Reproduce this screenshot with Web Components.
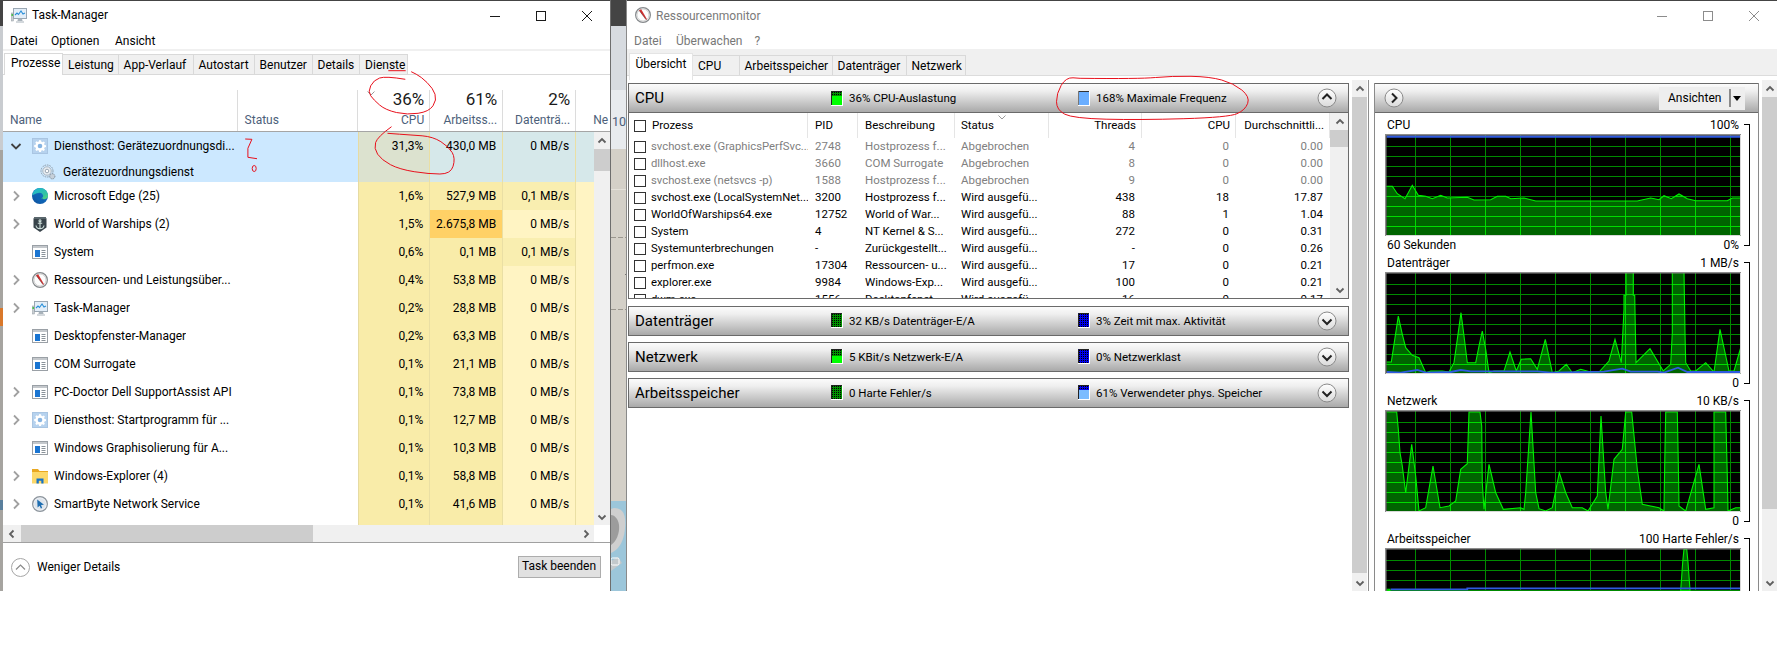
<!DOCTYPE html>
<html lang="de"><head><meta charset="utf-8"><title>Task-Manager und Ressourcenmonitor</title>
<style>
html,body{margin:0;padding:0;background:#fff;overflow:hidden}
body{font:12px "Roboto","Liberation Sans",sans-serif;color:#000;width:1777px;height:648px}
</style></head><body>
<desk-root>
  <desk-strip slot="strip"></desk-strip>
  <tm-window slot="tm">
    <win-titlebar slot="title"><app-icon slot="icon" kind="taskmgr"></app-icon>Task-Manager</win-titlebar>
    <win-menu slot="menu" items="Datei:7|Optionen:48|Ansicht:112"></win-menu>
    <win-tabs slot="tabs" items="Prozesse:59|Leistung:55.6|App-Verlauf:75|Autostart:61|Benutzer:58|Details:47.5|Dienste:48" first="1" mode="tm"></win-tabs>
    <tm-head slot="head"></tm-head>
    <tm-row expand="open" sel cpu="31,3%" mem="430,0 MB" disk="0 MB/s"><app-icon slot="icon" kind="gearbox"></app-icon>Diensthost: Gerätezuordnungsdi...</tm-row>
    <tm-row child sel><app-icon slot="icon" kind="gear"></app-icon>Gerätezuordnungsdienst</tm-row>
    <tm-row expand="closed" cpu="1,6%" mem="527,9 MB" disk="0,1 MB/s" diskwarm><app-icon slot="icon" kind="edge"></app-icon>Microsoft Edge (25)</tm-row>
    <tm-row expand="closed" cpu="1,5%" mem="2.675,8 MB" disk="0 MB/s" memhot><app-icon slot="icon" kind="wows"></app-icon>World of Warships (2)</tm-row>
    <tm-row cpu="0,6%" mem="0,1 MB" disk="0,1 MB/s" diskwarm><app-icon slot="icon" kind="win"></app-icon>System</tm-row>
    <tm-row expand="closed" cpu="0,4%" mem="53,8 MB" disk="0 MB/s"><app-icon slot="icon" kind="resmon"></app-icon>Ressourcen- und Leistungsüber...</tm-row>
    <tm-row expand="closed" cpu="0,2%" mem="28,8 MB" disk="0 MB/s"><app-icon slot="icon" kind="taskmgr"></app-icon>Task-Manager</tm-row>
    <tm-row cpu="0,2%" mem="63,3 MB" disk="0 MB/s"><app-icon slot="icon" kind="win"></app-icon>Desktopfenster-Manager</tm-row>
    <tm-row cpu="0,1%" mem="21,1 MB" disk="0 MB/s"><app-icon slot="icon" kind="win"></app-icon>COM Surrogate</tm-row>
    <tm-row expand="closed" cpu="0,1%" mem="73,8 MB" disk="0 MB/s"><app-icon slot="icon" kind="win"></app-icon>PC-Doctor Dell SupportAssist API</tm-row>
    <tm-row expand="closed" cpu="0,1%" mem="12,7 MB" disk="0 MB/s"><app-icon slot="icon" kind="gearbox"></app-icon>Diensthost: Startprogramm für ...</tm-row>
    <tm-row cpu="0,1%" mem="10,3 MB" disk="0 MB/s"><app-icon slot="icon" kind="win"></app-icon>Windows Graphisolierung für A...</tm-row>
    <tm-row expand="closed" cpu="0,1%" mem="58,8 MB" disk="0 MB/s"><app-icon slot="icon" kind="folder"></app-icon>Windows-Explorer (4)</tm-row>
    <tm-row expand="closed" cpu="0,1%" mem="41,6 MB" disk="0 MB/s"><app-icon slot="icon" kind="smart"></app-icon>SmartByte Network Service</tm-row>
    <tm-row><app-icon slot="icon" kind="win"></app-icon></tm-row>
  </tm-window>
  <desk-gap slot="gap">103</desk-gap>
  <rm-window slot="rm">
    <win-titlebar slot="title" tone="gray"><app-icon slot="icon" kind="resmon"></app-icon>Ressourcenmonitor</win-titlebar>
    <win-menu slot="menu" items="Datei:7|Überwachen:49|?:127.5" tone="gray"></win-menu>
    <win-tabs slot="tabs" items="Übersicht:64.5|CPU:46.5|Arbeitsspeicher:93|Datenträger:74|Netzwerk:59.5" first="1.5" mode="rm"></win-tabs>

    <rm-bar slot="left" open t1="36% CPU-Auslastung" t2="168% Maximale Frequenz" i1="cpu" i2="freq">CPU</rm-bar>
    <rm-table slot="left">
      <rm-row a="svchost.exe (GraphicsPerfSvc..." b="2748" c="Hostprozess f..." d="Abgebrochen" e="4" f="0" g="0.00" dim></rm-row>
      <rm-row a="dllhost.exe" b="3660" c="COM Surrogate" d="Abgebrochen" e="8" f="0" g="0.00" dim></rm-row>
      <rm-row a="svchost.exe (netsvcs -p)" b="1588" c="Hostprozess f..." d="Abgebrochen" e="9" f="0" g="0.00" dim></rm-row>
      <rm-row a="svchost.exe (LocalSystemNet..." b="3200" c="Hostprozess f..." d="Wird ausgefü..." e="438" f="18" g="17.87"></rm-row>
      <rm-row a="WorldOfWarships64.exe" b="12752" c="World of War..." d="Wird ausgefü..." e="88" f="1" g="1.04"></rm-row>
      <rm-row a="System" b="4" c="NT Kernel &amp; S..." d="Wird ausgefü..." e="272" f="0" g="0.31"></rm-row>
      <rm-row a="Systemunterbrechungen" b="-" c="Zurückgestellt..." d="Wird ausgefü..." e="-" f="0" g="0.26"></rm-row>
      <rm-row a="perfmon.exe" b="17304" c="Ressourcen- u..." d="Wird ausgefü..." e="17" f="0" g="0.21"></rm-row>
      <rm-row a="explorer.exe" b="9984" c="Windows-Exp..." d="Wird ausgefü..." e="100" f="0" g="0.21"></rm-row>
      <rm-row a="dwm.exe" b="1556" c="Desktopfenst..." d="Wird ausgefü..." e="16" f="0" g="0.17"></rm-row>
    </rm-table>
    <rm-bar slot="left" t1="32 KB/s Datenträger-E/A" t2="3% Zeit mit max. Aktivität" i1="dark" i2="blue">Datenträger</rm-bar>
    <rm-bar slot="left" t1="5 KBit/s Netzwerk-E/A" t2="0% Netzwerklast" i1="net" i2="blue">Netzwerk</rm-bar>
    <rm-bar slot="left" t1="0 Harte Fehler/s" t2="61% Verwendeter phys. Speicher" i1="dark" i2="mem">Arbeitsspeicher</rm-bar>

    <rm-graph slot="right" kind="cpu" label="CPU" top="100%" sub="60 Sekunden" bottom="0%"></rm-graph>
    <rm-graph slot="right" kind="disk" label="Datenträger" top="1 MB/s" bottom="0"></rm-graph>
    <rm-graph slot="right" kind="net" label="Netzwerk" top="10 KB/s" bottom="0"></rm-graph>
    <rm-graph slot="right" kind="mem" label="Arbeitsspeicher" top="100 Harte Fehler/s" bottom=""></rm-graph>
  </rm-window>
  <red-marks slot="marks"></red-marks>
</desk-root>
<script>
function shadow(host,html){const r=host.attachShadow({mode:'open'});r.innerHTML=html;return r;}

const ICONS={
taskmgr:`<rect x="2.5" y="1.5" width="13" height="10" fill="#e3eef8" stroke="#9aa7b3"/><path d="M4 8l2-2 1.5 1.5L10 4l2 3 2-1" fill="none" stroke="#2a8fd8" stroke-width="1.1"/><rect x="0" y="6" width="2.4" height="8" fill="#c9ced2" stroke="#8e979e" stroke-width=".5"/><rect x=".5" y="7" width="1.4" height="2" fill="#3cc13c"/><path d="M7 11.8h4l.6 2.2H6.4zM5 14.4h8v1.1H5z" fill="#a8b2ba"/>`,
gearbox:`<rect x=".5" y=".5" width="15" height="15" fill="#b6d2ee" stroke="#a9c5e2"/><path d="M8 2.2l1 .1.4 1.5 1 .4 1.3-.8 1.2 1.2-.8 1.3.4 1 1.5.4v1.8l-1.5.4-.4 1 .8 1.3-1.2 1.2-1.3-.8-1 .4-.4 1.5H7.2l-.4-1.5-1-.4-1.3.8-1.2-1.2.8-1.3-.4-1-1.5-.4V7.1l1.5-.4.4-1-.8-1.3 1.2-1.2 1.3.8 1-.4.4-1.5z" fill="#fff"/><circle cx="8" cy="8" r="2.3" fill="#86b4e2"/>`,
gear:`<g fill="none" stroke="#8e9aa6" stroke-width="1" stroke-dasharray="1.6 .9"><circle cx="7" cy="7" r="6"/></g><circle cx="7" cy="7" r="4.2" fill="#e9eff4" stroke="#aab4be"/><circle cx="7" cy="7" r="1.8" fill="#fff" stroke="#9aa6b2"/><circle cx="12.3" cy="12.3" r="2.6" fill="#c6d0da" stroke="#7f8c99" stroke-dasharray="1.2 .7"/>`,
edge:`<defs><linearGradient id="e1" x1="0" y1="1" x2="1" y2="0"><stop offset="0" stop-color="#0b4f9c"/><stop offset="1" stop-color="#1a7fd0"/></linearGradient><linearGradient id="e2" x1="0" y1="0" x2="1" y2="1"><stop offset="0" stop-color="#1ab4d8"/><stop offset=".7" stop-color="#35c4a0"/><stop offset="1" stop-color="#5fdc68"/></linearGradient></defs><circle cx="8" cy="8" r="8" fill="url(#e1)"/><path d="M.4 7.3C1 3 4.2 0 8 0c4.4 0 8 3.4 8 7.7 0 2.3-2 3.5-4 3.5-1.2 0-2.2-.4-2.7-.9 1.7-.5 2.2-2 1.6-3.2C10.200 5.300 8.800 4.600 7.200 4.800 3.800 5.200 1.800 6.800.4 7.300z" fill="url(#e2)"/><path d="M4.500 9.500C4.700 7 6.500 5.600 8.300 5.700c-1.300 1.200-1.300 3.400.2 5 1.200 1.300 3.400 2 5.700 1.200-1.700 2-5 2.700-7 1.500-1.800-1-2.900-2.300-2.700-3.900z" fill="#0d62b4"/>`,
wows:`<path d="M2.500 1h11l1 2v8.500L8 16l-6.500-4.500V3z" fill="#38434a"/><path d="M2.500 1h11l1 2H1.500z" fill="#59666c"/><g stroke="#cfe0dc" stroke-width="1.100" fill="none"><circle cx="8" cy="4.700" r="1"/><path d="M8 5.700v7M5.800 7.200h4.400M4 9.500c.3 2.300 2.200 3.200 4 3.200s3.700-.9 4-3.200"/></g>`,
win:`<rect x=".5" y="1.500" width="15" height="13" fill="#fff" stroke="#9aa0a6"/><rect x="1" y="2" width="14" height="2" fill="#c4c8cc"/><rect x="3" y="6" width="5" height="7" fill="#1a75d2"/><path d="M9.500 6.500h4M9.500 8.500h4M9.500 10.500h4M9.500 12.500h4" stroke="#8a9299" stroke-width="1"/>`,
resmon:`<defs><radialGradient id="r1"><stop offset=".75" stop-color="#fdfdfd"/><stop offset="1" stop-color="#e8e8e8"/></radialGradient></defs><circle cx="8" cy="8" r="7.400" fill="url(#r1)" stroke="#85898c" stroke-width="1.200"/><circle cx="8" cy="8" r="6" fill="none" stroke="#c9c9c9" stroke-width=".8"/><path d="M4 3.300l2.200-1L12 12.300l-.8.500z" fill="#d03030"/><path d="M4.300 3.500L11 12.600" stroke="#5a1e1e" stroke-width=".5"/>`,
folder:`<path d="M0 1h6l1.500 2H16v2H0z" fill="#e9a820"/><rect x="0" y="4" width="16" height="11.500" fill="#fcd86a"/><path d="M4.500 15.500V10.500h7v5h-2.200v-2.800H6.800v2.800z" fill="#1673c8"/>`,
smart:`<circle cx="8" cy="8" r="7.400" fill="#eef2f6" stroke="#8c949c" stroke-width="1.200"/><circle cx="8" cy="8" r="5.800" fill="#dfe5ec"/><path d="M5.200 3.500L12 8.800l-2.900.3 1 3-1.200 .5-1.300-2.800-2 1.600z" fill="#1d6db0"/>`
};
class AppIcon extends HTMLElement{connectedCallback(){if(this.shadowRoot)return;
  shadow(this,`<style>:host{display:block;width:16px;height:16px;flex:none}svg{display:block;width:16px;height:16px}</style><svg viewBox="0 0 16 16">${ICONS[this.getAttribute('kind')]||''}</svg>`);}}
customElements.define('app-icon',AppIcon);

class DeskRoot extends HTMLElement{constructor(){super();
  shadow(this,`<style>:host{display:block;position:relative;width:1777px;height:648px;overflow:hidden}
  .g{display:grid;grid-template-columns:3px 607px 17px 1150px;height:591px}</style>
  <div class="g"><slot name="strip"></slot><slot name="tm"></slot><slot name="gap"></slot><slot name="rm"></slot></div><slot name="marks"></slot>`);}}
customElements.define('desk-root',DeskRoot);

class DeskStrip extends HTMLElement{constructor(){super();
  shadow(this,`<style>:host{display:block;height:591px;background:linear-gradient(#444 0 26px,#c9ccd0 26px 150px,#a6a4a0 150px 308px,#d9782a 308px 326px,#a6a4a0 326px 500px,#5a7f9c 500px 510px,#a6a4a0 510px 591px)}</style>`);}}
customElements.define('desk-strip',DeskStrip);

class DeskGap extends HTMLElement{constructor(){super();
  shadow(this,`<style>:host{display:flex;flex-direction:column;height:591px;box-sizing:border-box;border-left:1px solid #6e6e6e;border-right:1px solid #8a8a8a;overflow:hidden}
  .a{height:26px;background:#444}.b{height:64px;background:#d7dbe0}
  .c{height:59px;background:#e8ebee;color:#4c607a;font-size:12.500px;line-height:16px;padding:24px 0 0 1px;box-sizing:border-box;white-space:nowrap}
  .d{height:352px;background:#d4d0c8}.d svg{display:block}
  .e{height:90px;background:#9cc6da}.e svg{display:block}</style>
  <div class="a"></div><div class="b"></div><div class="c"><slot></slot></div>
  <div class="d"><svg width="15" height="352"><path d="M0 40.500H15" stroke="#e4e1da"/><path d="M0 88.500H15" stroke="#9a968e" stroke-dasharray="5 2"/><path d="M14 125.500H15" stroke="#777"/><path d="M0 160.500H15" stroke="#9a968e" stroke-dasharray="5 2"/></svg></div>
  <div class="e"><svg width="15" height="90"><path d="M0 8c3-2 8-1 11 2 4 4 4 14 2 24-2 8-5 14-13 18z" fill="#cfcfcf"/><path d="M0 14c3 0 7 3 8 10 1 8-3 17-8 20z" fill="#9c9c9c"/><path d="M0 60l7-4 4 6-11 8z" fill="#c3c9cc"/><rect x="0" y="57" width="8" height="7" rx="1.500" fill="none" stroke="#fff"/></svg></div>`);}}
customElements.define('desk-gap',DeskGap);

class WinTitlebar extends HTMLElement{constructor(){super();const g=this.getAttribute('tone')==='gray';
  const c=g?'#8c8c8c':'#1a1a1a';
  shadow(this,`<style>:host{display:flex;align-items:center;height:29px;background:#fff;color:${g?'#7a7a7a':'#000'};white-space:nowrap;box-sizing:border-box;padding-left:8px}
  .t{margin-left:5px;${g?'':'margin-top:-1px'}}::slotted(app-icon){margin-top:-2px}
  .btns{margin-left:auto;display:flex;height:100%;align-items:center}
  .btns svg{display:block}.b{width:46px;display:flex;justify-content:center}</style>
  <slot name="icon"></slot><span class="t"><slot></slot></span>
  <div class="btns"><div class="b"><svg width="10" height="10"><path d="M0 5.500H10" stroke="${c}"/></svg></div><div class="b"><svg width="10" height="10"><rect x=".5" y=".5" width="9" height="9" fill="none" stroke="${c}"/></svg></div><div class="b"><svg width="10" height="10"><path d="M0 0L10 10M10 0L0 10" stroke="${c}"/></svg></div></div>`);}}
customElements.define('win-titlebar',WinTitlebar);

class WinMenu extends HTMLElement{constructor(){super();const g=this.getAttribute('tone')==='gray';
  const it=this.getAttribute('items').split('|').map(s=>s.split(':'));
  const h=it.map(([t,x])=>`<span style="left:${x}px">${t}</span>`).join('');
  shadow(this,`<style>:host{display:block;position:relative;height:19px;background:#fff;color:${g?'#777':'#000'}}
  span{position:absolute;top:3px;line-height:16px;white-space:nowrap}</style>${h}`);}}
customElements.define('win-menu',WinMenu);

class WinTabs extends HTMLElement{constructor(){super();
  const it=this.getAttribute('items').split('|').map(s=>s.split(':'));const tm=this.getAttribute('mode')==='tm';
  const h=it.map(([t,w],i)=>`<div class="t ${i==0?'on':''}" style="width:${w}px">${t}</div>`).join('');
  shadow(this,`<style>:host{display:flex;align-items:flex-end;height:26px;box-sizing:border-box;padding-left:${this.getAttribute('first')}px;
    ${tm?'background:linear-gradient(#f0f0f0 0 2px,#fff 2px);border-bottom:1px solid #d9d9d9':'background:#f0f0f0'};position:relative}
  .t{box-sizing:border-box;height:20px;background:#f0f0f0;border:1px solid #d9d9d9;border-left:0;border-bottom:0;line-height:20px;padding-left:5px;white-space:nowrap;overflow:hidden}
  .on{background:#fff;border:1px solid #d9d9d9;border-bottom:0;${tm?'height:22px;margin-bottom:-1px;line-height:18px;padding-left:6px':'height:27px;margin-bottom:-5px;line-height:20px;padding-left:6px;padding-bottom:6px;position:relative;z-index:2;border-color:#e4e4e4'}}
  </style>${h}`);}}
customElements.define('win-tabs',WinTabs);

class WinScroll extends HTMLElement{constructor(){super();
  const o=this.getAttribute('o')||'v',s=+this.getAttribute('s')||0,n=+this.getAttribute('n')||0;const v=o==='v';
  const a=`<path d="M2.500 7.500L6 4l3.500 3.500" fill="none" stroke="#5f5f5f" stroke-width="1.800"/>`;
  const b=`<path d="M2.500 4.500L6 8l3.500-3.500" fill="none" stroke="#5f5f5f" stroke-width="1.800"/>`;
  const l=`<path d="M7.500 2.500L4 6l3.500 3.500" fill="none" stroke="#5f5f5f" stroke-width="1.800"/>`;
  const r=`<path d="M4.500 2.500L8 6l-3.500 3.500" fill="none" stroke="#5f5f5f" stroke-width="1.800"/>`;
  shadow(this,`<style>:host{display:flex;${v?'flex-direction:column':''};background:#f0f0f0;box-sizing:border-box;flex:none}
  .a{flex:none;${v?'height:17px':'width:17px'};display:flex;align-items:center;justify-content:center}
  .tr{flex:1;min-${v?'height':'width'}:0}
  .th{background:#cdcdcd;${v?`margin-top:${s}px;height:${n}px`:`margin-left:${s}px;width:${n}px;height:100%`}}</style>
  <div class="a"><svg width="12" height="12">${v?a:l}</svg></div><div class="tr"><div class="th"></div></div><div class="a"><svg width="12" height="12">${v?b:r}</svg></div>`);}}
customElements.define('win-scroll',WinScroll);

const TMCOLS='234.6px 120px 72.6px 73px 73px 17.8px';
class TmWindow extends HTMLElement{constructor(){super();
  shadow(this,`<style>:host{display:flex;flex-direction:column;height:591px;width:607px;box-sizing:border-box;border-top:1px solid #444;background:#fff;overflow:hidden}
  .body{display:flex;height:393px;flex:none}.rows{width:591px;overflow:hidden;flex:none;height:393px}
  .hs{display:flex;height:17px;flex:none}
  .foot{flex:1;border-top:1px solid #a0a0a0;display:flex;align-items:center;padding:0 9.500px 0 8px}
  .foot svg{display:block;margin-right:7px}.btn{margin-left:auto;width:83px;height:22px;box-sizing:border-box;border:1px solid #adadad;background:#e1e1e1;text-align:center;line-height:19px;white-space:nowrap}
  win-scroll.h{width:591px}.c{flex:1}</style>
  <slot name="title"></slot><slot name="menu"></slot><slot name="tabs"></slot><slot name="head"></slot>
  <div class="body"><div class="rows"><slot></slot></div><win-scroll o="v" s="0" n="22" style="width:16px"></win-scroll></div>
  <div class="hs"><win-scroll class="h" o="h" s="1" n="292"></win-scroll><div class="c"></div></div>
  <div class="foot"><svg width="19" height="19"><circle cx="9.500" cy="9.500" r="9" fill="#fff" stroke="#a6a6a6"/><path d="M5 11.500L9.500 7l4.500 4.500" fill="none" stroke="#8a8a8a" stroke-width="1.200"/></svg><span>Weniger Details</span><div class="btn">Task beenden</div></div>`);}}
customElements.define('tm-window',TmWindow);

class TmHead extends HTMLElement{constructor(){super();
  const c=(p,l)=>`<div class="c"><div class="p">${p}</div><div class="l">${l}</div></div>`;
  shadow(this,`<style>:host{display:grid;grid-template-columns:${TMCOLS} 16px;height:57px;box-sizing:border-box;border-bottom:1px solid #a5a5a5;background:#fff}
  .c{position:relative;box-sizing:border-box;display:flex;flex-direction:column;justify-content:flex-end;padding:0 6px 2px 7px;text-align:right;white-space:nowrap;color:#4c607a}
  .c::after{content:"";position:absolute;right:0;top:15px;bottom:0;width:1px;background:#dcdcdc}
  .p{font-size:17px;color:#1a1a1a;line-height:22px;margin-bottom:1px}.l{line-height:18px;height:18px}
  .left{text-align:left}.n{overflow:hidden}.n::after{display:none}
  .ch{position:absolute;left:9px;top:16px}</style>
  <div class="c left"><div class="l">Name</div></div>
  <div class="c left"><div class="l">Status</div></div>
  <div class="c"><svg class="ch" width="8" height="6"><path d="M.5 .5L4 4l3.500-3.500" fill="none" stroke="#9a9a9a"/></svg><div class="p">36%</div><div class="l">CPU</div></div>
  ${c('61%','Arbeitss...')}${c('2%','Datenträ...')}
  <div class="c n left" style="grid-column:span 2;padding-left:17px"><div class="l">Ne</div></div>`);}}
customElements.define('tm-head',TmHead);

class TmRow extends HTMLElement{connectedCallback(){if(this.shadowRoot)return;
  const A=n=>this.getAttribute(n),H=n=>this.hasAttribute(n);const sel=H('sel'),child=H('child');
  const e=A('expand');
  const chev=e==='open'?`<svg width="12" height="12"><path d="M1.500 4L6 8.500 10.500 4" fill="none" stroke="#404040" stroke-width="1.800"/></svg>`:e==='closed'?`<svg width="12" height="12"><path d="M4 1.500L8.500 6 4 10.500" fill="none" stroke="#a0a0a0" stroke-width="1.800"/></svg>`:'';
  const base1=sel?'#dce2cf':'#f9eca9',base2=sel?'#d6e8ea':'#f9eca9',base3=sel?'#d6e8ea':'#fff4c3';
  shadow(this,`<style>:host{display:grid;grid-template-columns:${TMCOLS};height:${child?22:28}px;background:${sel?'#cce8ff':'#fff'};line-height:28px;white-space:nowrap}
  .n{display:flex;align-items:center;height:${child?'21px':'28px'};padding-left:${child?'37px':'7px'};${child?'margin-top:1px;':''}overflow:hidden}
  .ch{width:12px;margin-right:10px;display:flex;flex:none}
  .v{text-align:right;padding-right:6px;box-sizing:border-box;border-right:1px solid #eadfa4;${child?'line-height:22px':''}}
  .cpu{background:${base1};border-left:1px solid #e6dba3}.mem{background:${H('memhot')?'#ffd166':base2}}
  .dsk{background:${H('diskwarm')?'#f9eeb0':base3}}.net{background:${base3};border-right:0}
  .t{margin-left:${child?'7px':'6px'};overflow:hidden}</style>
  <div class="n">${child?'':`<span class="ch">${chev}</span>`}<slot name="icon"></slot><span class="t"><slot></slot></span></div><div></div>
  <div class="v cpu">${A('cpu')||''}</div><div class="v mem">${A('mem')||''}</div><div class="v dsk">${A('disk')||''}</div><div class="v net"></div>`);}}
customElements.define('tm-row',TmRow);

class RmWindow extends HTMLElement{constructor(){super();
  shadow(this,`<style>:host{display:flex;flex-direction:column;height:591px;width:1150px;box-sizing:border-box;border-top:1px solid #444;background:#fff;overflow:hidden}
  .main{flex:1;display:flex;min-height:0;border-top:1px solid #dcdcdc;background:#fff;position:relative}
  .lp{width:723px;flex:none;padding:7px 0 0 1px;overflow:hidden;height:509px}
  .ls{width:15px;margin:4px 0 0 1px;flex:none}
  .dv{width:1px;background:#8e8e8e;margin:4px 5px 0 1px;flex:none}
  .rp{width:385px;flex:none;margin-top:7px;box-sizing:border-box;border:solid #8a8a8a;border-width:0 1px;overflow:hidden;display:flex;flex-direction:column}
  .rh{height:30px;flex:none;box-sizing:border-box;border:solid #6a6a6a;border-width:1.500px 0 1px;background:linear-gradient(#fbfbfb,#efefef 25%,#a9a9a9);display:flex;align-items:center;padding-left:9px}
  .sp{height:2px;flex:none}
  .an{margin-left:auto;margin-right:13px;width:86px;height:23px;background:#eeeeee;display:flex;align-items:center;box-sizing:border-box;padding-left:9px;white-space:nowrap}
  .an i{display:block;width:2px;height:18px;background:#8a8a8a;margin-left:auto;margin-right:2px}.an b{display:block;width:0;height:0;border:4.500px solid transparent;border-top:5px solid #000;border-bottom:0;margin-right:4px}
  .rs{width:16px;margin:4px 0 0 3px;flex:none}</style>
  <slot name="title"></slot><slot name="menu"></slot><slot name="tabs"></slot>
  <div class="main"><div class="lp"><slot name="left"></slot></div>
  <win-scroll class="ls" o="v" s="0" n="476"></win-scroll><div class="dv"></div>
  <div class="rp"><div class="rh"><rm-circle dir="right"></rm-circle><div class="an">Ansichten<i></i><b></b></div></div><div class="sp"></div><slot name="right"></slot></div>
  <win-scroll class="rs" o="v" s="0" n="412"></win-scroll></div>`);}}
customElements.define('rm-window',RmWindow);

class RmCircle extends HTMLElement{constructor(){super();const d=this.getAttribute('dir');
  const p={up:'M5.500 11L10 6.500 14.500 11',down:'M5.500 8.500L10 13 14.500 8.500',right:'M8 5.500L12.500 10 8 14.500'}[d];
  shadow(this,`<style>:host{display:block;width:20px;height:20px;flex:none}svg{display:block}</style><svg width="20" height="20"><defs><linearGradient id="g" x1="0" y1="0" x2="0" y2="1"><stop offset="0" stop-color="#fff"/><stop offset="1" stop-color="#dadada"/></linearGradient></defs><circle cx="10" cy="10" r="9" fill="url(#g)" stroke="#8a8a8a"/><path d="${p}" fill="none" stroke="#222" stroke-width="2"/></svg>`);}}
customElements.define('rm-circle',RmCircle);

function indicator(k){
  const M={cpu:['#009000','#00ff00',62],dark:['#009000','#009000',0],blue:['#0000f0','#0000f0',0],net:['#009000','#00ff00',50],mem:['#0000f0','#7cbcff',62]}[k];
  if(k==='freq')return `<svg width="12" height="15" style="display:block;flex:none"><rect width="12" height="15" fill="#fff"/><rect width="11" height="14" fill="#6aaeff"/><rect width="11" height="1" fill="#333"/><rect width="1" height="14" fill="#777"/></svg>`;
  let dots='';for(let y=1;y<14;y+=2)for(let x=1;x<11;x+=2)dots+=`M${x} ${y}h1v1h-1z`;
  const h=14,f=Math.round(h*M[2]/100);
  return `<svg width="12" height="15" style="display:block;flex:none"><rect width="12" height="15" fill="#fff"/><rect width="11" height="14" fill="${M[0]}"/><path d="${dots}" fill="#000"/><rect y="${h-f}" width="11" height="${f}" fill="${M[1]}"/><path d="M.5 14V.5H11" fill="none" stroke="#222"/></svg>`;
}
class RmBar extends HTMLElement{connectedCallback(){if(this.shadowRoot)return;
  const A=n=>this.getAttribute(n),o=this.hasAttribute('open');
  shadow(this,`<style>:host{display:flex;align-items:center;height:30px;box-sizing:border-box;width:721px;border:solid #6a6a6a;border-width:1.500px 1px 1px;background:linear-gradient(#fbfbfb,#efefef 25%,#a9a9a9);margin-bottom:${o?0:6}px;white-space:nowrap}
  .t{width:202px;font-size:15px;padding-left:6px;box-sizing:border-box;flex:none}
  .i{display:flex;align-items:center;gap:6px;flex:none;font-size:11.500px}.a{width:247px}
  .b{margin-left:auto;margin-right:11px}</style>
  <div class="t"><slot></slot></div><div class="i a">${indicator(A('i1'))}<span>${A('t1')}</span></div><div class="i">${indicator(A('i2'))}<span>${A('t2')}</span></div>
  <rm-circle class="b" dir="${o?'up':'down'}"></rm-circle>`);}}
customElements.define('rm-bar',RmBar);

const RMCOLS='179px 50px 97px 94px 93px 94px 94px';
class RmTable extends HTMLElement{constructor(){super();
  shadow(this,`<style>:host{display:block;width:721px;height:186px;box-sizing:border-box;border:solid #6a6a6a;border-width:0 1px 1px;overflow:hidden;margin-bottom:6.500px;background:#fff;font-size:11.500px}
  .w{display:flex;height:185px}.m{width:701px;flex:none;overflow:hidden}
  .h{display:grid;grid-template-columns:${RMCOLS};height:25px;line-height:25px;position:relative;white-space:nowrap}
  .h>div{border-right:1px solid #e5e5e5;box-sizing:border-box;overflow:hidden}
  .p{padding-left:5px;display:flex;align-items:center;gap:6px}.box{width:12px;height:12px;box-sizing:border-box;border:1px solid #333;background:#fff;flex:none}
  .l{padding-left:7px}.r{text-align:right;padding-right:5px}
  .ch{position:absolute;left:369px;top:2px}
  win-scroll{width:19px;height:185px}</style>
  <div class="w"><div class="m"><div class="h"><div class="p"><span class="box"></span>Prozess</div><div class="l">PID</div><div class="l">Beschreibung</div><div class="l" style="padding-left:6px">Status</div><div class="r">Threads</div><div class="r">CPU</div><div class="r">Durchschnittli...</div>
  <svg class="ch" width="8" height="6"><path d="M.5 .5L4 4l3.500-3.500" fill="none" stroke="#9a9a9a"/></svg></div><slot></slot></div>
  <win-scroll o="v" s="0" n="17"></win-scroll></div>`);}}
customElements.define('rm-table',RmTable);

class RmRow extends HTMLElement{connectedCallback(){if(this.shadowRoot)return;
  const A=n=>this.getAttribute(n);
  shadow(this,`<style>:host{display:grid;grid-template-columns:${RMCOLS};height:17px;line-height:17px;white-space:nowrap;color:${this.hasAttribute('dim')?'#808080':'#000'}}
  div{overflow:hidden}.p{padding-left:5px;display:flex;align-items:center;gap:5px;font-size:11.300px}.box{width:12px;height:12px;box-sizing:border-box;border:1px solid #333;background:#fff;flex:none}
  .l{padding-left:7px}.s{padding-left:6px}.r{text-align:right;padding-right:7px}</style>
  <div class="p"><span class="box"></span><span>${A('a')}</span></div><div class="l">${A('b')}</div><div class="l">${A('c').replace('&','&amp;')}</div><div class="s">${A('d')}</div><div class="r">${A('e')}</div><div class="r">${A('f')}</div><div class="r">${A('g')}</div>`);}}
customElements.define('rm-row',RmRow);

/* Polylines, in 3x-zoom coordinates of the reference; converted below */
const GRAPH={
 cpu:{top:403,line:[[108,560],[125,560],[140,582],[163,597],[185,557],[203,587],[225,590],[245,597],[270,587],[290,595],[350,593],[370,601],[420,600],[440,590],[465,590],[480,597],[520,595],[555,604],[860,604],[900,595],[925,600],[940,588],[962,597],[985,583],[1010,597],[1035,603],[1130,603],[1145,595],[1170,595]],
   blue:[[108,411],[1170,411]],blueW:2.2,off:0},
 disk:{top:818,off:960,line:[[108,128],[122,128],[130,75],[143,-10],[155,45],[165,85],[185,108],[205,115],[225,160],[240,155],[275,155],[295,158],[310,130],[320,60],[331,-20],[340,50],[350,130],[375,130],[385,80],[395,35],[405,90],[415,160],[430,155],[460,155],[478,98],[497,155],[512,120],[540,118],[560,150],[584,60],[605,160],[625,155],[647,135],[665,160],[690,150],[720,158],[745,158],[775,125],[793,60],[812,130],[820,-30],[820,-72],[826,-72],[826,-142],[848,-142],[848,-72],[852,-72],[856,130],[898,88],[938,155],[960,135],[965,40],[965,-142],[1000,-142],[1003,40],[1005,130],[1020,155],[1035,155],[1065,130],[1090,158],[1108,30],[1135,155],[1150,155],[1170,85]],
   blue:[[108,158],[150,160],[200,152],[225,160],[300,158],[330,152],[360,156],[560,156],[600,160],[760,157],[815,148],[840,157],[920,157],[940,160],[982,145],[1010,158],[1060,158],[1170,158]],blueW:1.8},
 net:{top:272,off:0,line:[[108,278],[138,278],[143,330],[148,400],[155,440],[165,520],[183,375],[195,470],[205,575],[225,565],[247,440],[268,565],[295,560],[315,545],[330,450],[350,433],[355,278],[388,278],[393,320],[395,490],[400,570],[415,435],[435,520],[458,570],[510,565],[520,570],[525,520],[541,278],[555,520],[565,568],[585,575],[605,565],[626,460],[645,520],[665,565],[695,565],[712,575],[740,530],[751,290],[765,520],[772,570],[790,420],[815,390],[825,278],[843,278],[860,450],[875,555],[925,565],[940,575],[942,435],[945,278],[980,278],[983,430],[985,560],[1005,575],[1045,435],[1065,570],[1090,565],[1090,278],[1125,278],[1130,470],[1132,575],[1155,565],[1170,565]]},
 mem:{top:687,off:0,line:[[108,811],[118,811],[120,990],[986,990],[990,813],[996,730],[1000,690],[1008,690],[1012,730],[1018,813],[1022,990],[1170,990]],
   blue:[[120,811],[350,811],[350,808],[1170,808]],blueW:1.8}
};
class RmGraph extends HTMLElement{connectedCallback(){if(this.shadowRoot)return;
  const A=n=>this.getAttribute(n),kd=A('kind'),G=GRAPH[kd];
  const X=x=>(x-103)/3,Y=y=>(y+(G.off||0)-G.top)/3;
  const pts=G.line.map(([x,y])=>`${X(x).toFixed(1)},${Y(y).toFixed(1)}`).join(' ');
  const fill=`${X(108).toFixed(1)},102 ${pts} ${X(1170).toFixed(1)},102`;
  let gv='';for(let x=30;x<356;x+=35)gv+=`M${x+.5} 0V102`;
  let gh='';for(let y=12;y<102;y+=10)gh+=`M0 ${y+.5}H356`;
  const blue=G.blue?`<polyline points="${G.blue.map(([x,y])=>`${X(x).toFixed(1)},${Y(y).toFixed(1)}`).join(' ')}" fill="none" stroke="#2f5ae0" stroke-width="${G.blueW}"/>`:'';
  const id='c'+kd;
  shadow(this,`<style>:host{display:grid;grid-template-columns:356px 8px;column-gap:3px;margin-left:10px;flex:none;height:138px;grid-template-rows:19px 102px 17px;white-space:nowrap}
  .l{display:flex;justify-content:space-between;padding:2px 2px 0;line-height:17px;align-items:center;box-sizing:border-box}
  .l2{padding-top:2px}
  .g{display:block}
  .br{grid-column:2;grid-row:1/4;margin-top:9px;height:122px;box-sizing:border-box;width:6px;border:solid #000;border-width:1.500px 1.500px 1.500px 0}</style>
  <div class="l"><span>${A('label')}</span><span>${A('top')}</span></div>
  <div class="br"></div>
  <svg class="g" width="356" height="102" style="grid-column:1;grid-row:2"><defs><clipPath id="${id}"><polygon points="${fill}"/></clipPath></defs>
   <rect width="356" height="102" fill="#000"/>
   <path d="${gv}${gh}" stroke="#008a00" fill="none" shape-rendering="crispEdges"/>
   <polygon points="${fill}" fill="#006400"/>
   <g clip-path="url(#${id})"><path d="${gv}${gh}" stroke="#00dc00" fill="none" shape-rendering="crispEdges"/></g>
   <polyline points="${pts}" fill="none" stroke="#00f000" stroke-width="1.100"/>
   ${blue}
   <path d="M.75 102V.75H356" fill="none" stroke="#8c8c8c" stroke-width="1.500"/><path d="M355.500 1V101.500H1" fill="none" stroke="#d8d8d8"/>
  </svg>
  <div class="l l2" style="grid-column:1;grid-row:3"><span>${A('sub')||''}</span><span>${A('bottom')}</span></div>`);}}
customElements.define('rm-graph',RmGraph);

class RedMarks extends HTMLElement{constructor(){super();
  const T1=([x,y])=>[x/2.529,y/3],T2=([x,y])=>[620+x/2.119,y/3];
  const smooth=p=>{let d=`M${p[0][0].toFixed(1)} ${p[0][1].toFixed(1)}`;
    for(let i=1;i<p.length-1;i++){const mx=(p[i][0]+p[i+1][0])/2,my=(p[i][1]+p[i+1][1])/2;d+=`Q${p[i][0].toFixed(1)} ${p[i][1].toFixed(1)} ${mx.toFixed(1)} ${my.toFixed(1)}`;}
    const l=p[p.length-1];d+=`L${l[0].toFixed(1)} ${l[1].toFixed(1)}`;return d;};
  const e1=[[1025,238],[975,228],[945,240],[930,275],[945,300],[975,330],[1030,345],[1085,335],[1105,300],[1095,265],[1065,230],[1040,215]].map(T1);
  const e2=[[990,380],[955,410],[945,445],[965,480],[1010,508],[1085,522],[1140,522],[1152,475],[1135,440],[1095,410],[1040,405],[980,400]].map(T1);
  const e3=[[975,235],[1100,237],[1170,228],[1250,230],[1300,250],[1335,290],[1325,330],[1290,352],[1100,360],[960,355],[925,330],[925,280],[945,232],[975,235]].map(T2);
  const seven=[[620,417],[637,418],[627,445],[627,472],[650,476]].map(T1).map(p=>p.map(v=>v.toFixed(1)).join(',')).join(' ');
  const line=[[982,212],[1026,212]].map(T1).map(p=>p.map(v=>v.toFixed(1)).join(',')).join(' ');
  shadow(this,`<style>:host{display:block;position:absolute;left:0;top:0;width:1777px;height:648px;pointer-events:none}svg{display:block}</style>
  <svg width="1777" height="648" fill="none" stroke="#e8101c" stroke-width="1"><path d="${smooth(e1)}"/><path d="${smooth(e2)}"/><path d="${smooth(e3)}"/><polyline points="${seven}"/><polyline points="${line}"/><ellipse cx="254.200" cy="168.500" rx="2" ry="3"/></svg>`);}}
customElements.define('red-marks',RedMarks);
</script>
</body></html>
